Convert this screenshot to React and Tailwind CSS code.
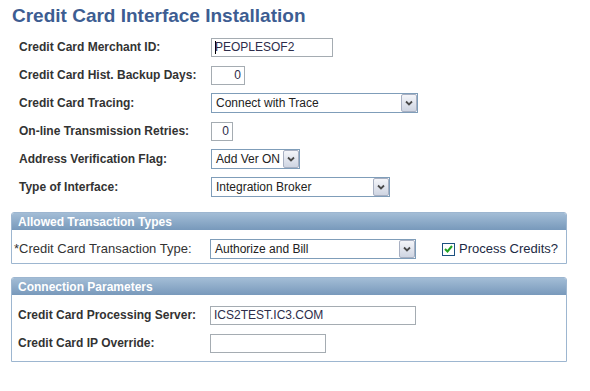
import React from "react";

const labelCls = "text-[12px] font-bold text-[#333333] leading-[14px]";

function TextBox({ value, width, align = "left", cursor = false }) {
  return (
    <div
      className={`h-[19px] border border-[#a5acb2] bg-white flex items-center text-[12px] text-[#2d2d4a] px-[3px] ${
        align === "right" ? "justify-end" : ""
      }`}
      style={{ width }}
    >
      {cursor && <span className="w-[1px] h-[13px] bg-black mr-[-1px]" />}
      <span className="leading-[14px]">{value}</span>
    </div>
  );
}

function Select({ value, width }) {
  return (
    <div
      className="h-[20px] border border-[#7f9db9] bg-white flex items-center text-[12px] text-[#222]"
      style={{ width }}
    >
      <span className="flex-1 pl-[4px] leading-[14px] whitespace-nowrap overflow-hidden">{value}</span>
      <div className="w-[16px] h-[18px] border border-[#a8b0c2] rounded-[2px] bg-gradient-to-b from-[#f4f5f9] to-[#cfd5e2] flex items-center justify-center">
        <svg width="8" height="6" viewBox="0 0 8 6">
          <path d="M1 1.5 L4 4.5 L7 1.5" fill="none" stroke="#4a4a4a" strokeWidth="1.8" />
        </svg>
      </div>
    </div>
  );
}

function Row({ label, children }) {
  return (
    <div className="h-[28px] flex items-center">
      <div className={`${labelCls} w-[192px]`}>{label}</div>
      {children}
    </div>
  );
}

function Group({ title, children }) {
  return (
    <div className="w-[556px] ml-[11px] border border-[#9db6d0] rounded-t-[3px]">
      <div className="h-[17px] bg-gradient-to-b from-[#a3bdd6] to-[#7899bb] rounded-t-[2px] flex items-center pl-[6px] text-[12px] font-bold text-white leading-[14px]">
        {title}
      </div>
      {children}
    </div>
  );
}

export default function App() {
  return (
    <div className="w-[590px] h-[391px] bg-white font-['Liberation_Sans',Arial,sans-serif]">
      <h1 className="pl-[12px] pt-[4px] text-[19px] font-bold leading-[23px] text-[#3d5d92]">
        Credit Card Interface Installation
      </h1>

      <div className="mt-[6px] pl-[19px]">
        <Row label="Credit Card Merchant ID:">
          <TextBox value="PEOPLESOF2" width={122} cursor />
        </Row>
        <Row label="Credit Card Hist. Backup Days:">
          <TextBox value="0" width={34} align="right" />
        </Row>
        <Row label="Credit Card Tracing:">
          <Select value="Connect with Trace" width={207} />
        </Row>
        <Row label="On-line Transmission Retries:">
          <TextBox value="0" width={22} align="right" />
        </Row>
        <Row label="Address Verification Flag:">
          <Select value="Add Ver ON" width={89} />
        </Row>
        <Row label="Type of Interface:">
          <Select value="Integration Broker" width={179} />
        </Row>
      </div>

      <div className="mt-[11px]">
        <Group title="Allowed Transaction Types">
          <div className="pt-[9px] pb-[4px] flex items-center">
            <div className={`${labelCls} w-[198px] pl-[2px] font-normal text-[13px] text-[#222]`}>
              *Credit Card Transaction Type:
            </div>
            <Select value="Authorize and Bill" width={206} />
            <div className="ml-[26px] flex items-center">
              <div className="w-[13px] h-[13px] border border-[#1c5180] bg-white flex items-center justify-center">
                <svg width="9" height="8" viewBox="0 0 9 8">
                  <path d="M1 4 L3.5 6.5 L8 1" fill="none" stroke="#22a322" strokeWidth="2" />
                </svg>
              </div>
              <span className="ml-[4px] text-[13px] text-[#1c2a44] leading-[14px]">Process Credits?</span>
            </div>
          </div>
        </Group>
      </div>

      <div className="mt-[13px]">
        <Group title="Connection Parameters">
          <div className="pt-[6px] pb-[4px] pl-[6px]">
            <Row label="Credit Card Processing Server:">
              <TextBox value="ICS2TEST.IC3.COM" width={206} />
            </Row>
            <Row label="Credit Card IP Override:">
              <TextBox value="" width={116} />
            </Row>
          </div>
        </Group>
      </div>
    </div>
  );
}
